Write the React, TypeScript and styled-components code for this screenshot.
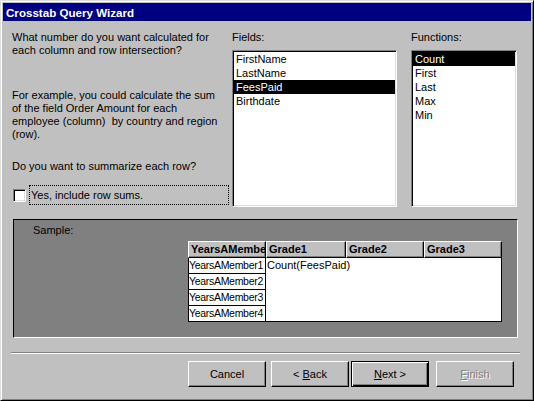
import React from "react";
import styled, { createGlobalStyle } from "styled-components";

const Global = createGlobalStyle`
  html, body { margin: 0; padding: 0; background: #c0c0c0; }
  body { font-family: "Liberation Sans", Arial, sans-serif; font-size: 11px; color: #000; }
  * { box-sizing: border-box; }
`;

const Window = styled.div`
  width: 534px;
  height: 401px;
  background: #c0c0c0;
  border: 1px solid;
  border-color: #dfdfdf #000 #000 #dfdfdf;
  box-shadow: inset 1px 1px #fff, inset -1px -1px #808080;
  padding: 2px;
  display: flex;
  flex-direction: column;
`;

const TitleBar = styled.div`
  height: 18px;
  background: #000080;
  color: #fff;
  font-weight: bold;
  font-size: 11.6px;
  display: flex;
  align-items: center;
  padding-left: 3px;
`;

const Main = styled.div`
  flex: 1;
  display: flex;
  flex-direction: column;
  padding: 10px 14px 0 9px;
`;

const Top = styled.div`
  display: flex;
  height: 176px;
`;

const LeftCol = styled.div`
  width: 220px;
  display: flex;
  flex-direction: column;
`;

const Para = styled.p<{ $mt?: number }>`
  margin: ${(p) => p.$mt ?? 0}px 0 0 0;
  line-height: 13px;
  white-space: nowrap;
`;

const CheckRow = styled.div`
  margin-top: 12px;
  display: flex;
  align-items: center;
  height: 20px;
`;

const CheckBox = styled.div`
  width: 13px;
  height: 13px;
  margin-left: 1px;
  background: #fff;
  border: 1px solid;
  border-color: #808080 #fff #fff #808080;
  box-shadow: inset 1px 1px #000, inset -1px -1px #dfdfdf;
`;

const FocusLabel = styled.div`
  margin-left: 3px;
  width: 200px;
  height: 20px;
  border: 1px dotted #000;
  padding-left: 1px;
  line-height: 18px;
`;

const ListCol = styled.div<{ $w: number; $ml?: number }>`
  width: ${(p) => p.$w}px;
  margin-left: ${(p) => p.$ml ?? 0}px;
  display: flex;
  flex-direction: column;
`;

const Label = styled.div`
  line-height: 13px;
  height: 13px;
  margin-bottom: 6px;
`;

const ListBox = styled.div`
  height: 157px;
  background: #fff;
  border: 1px solid;
  border-color: #808080 #fff #fff #808080;
  box-shadow: inset 1px 1px #000, inset -1px -1px #dfdfdf;
  padding: 1px;
`;

const Item = styled.div<{ $sel?: boolean }>`
  height: 14px;
  line-height: 14px;
  padding-left: 2px;
  background: ${(p) => (p.$sel ? "#000" : "transparent")};
  color: ${(p) => (p.$sel ? "#fff" : "#000")};
  white-space: nowrap;
`;

const SamplePanel = styled.div`
  margin: 12px -1px 0 1px;
  height: 119px;
  background: #808080;
  border: 1px solid;
  border-color: #000 #fff #fff #000;
  padding: 4px 15px 0 19px;
  display: flex;
  flex-direction: column;
`;

const SampleLabel = styled.div`
  line-height: 13px;
  height: 13px;
`;

const TableRow = styled.div`
  margin-top: 4px;
  display: flex;
  justify-content: flex-end;
`;

const Table = styled.div`
  width: 314px;
  display: flex;
  flex-direction: column;
`;

const HeaderRow = styled.div`
  display: flex;
  height: 17px;
`;

const HeaderCell = styled.div<{ $w: number }>`
  width: ${(p) => p.$w}px;
  background: #c0c0c0;
  border: 1px solid;
  border-color: #fff #000 #000 #fff;
  box-shadow: inset -1px -1px #808080;
  font-weight: bold;
  padding-left: 2px;
  line-height: 14px;
  overflow: hidden;
  white-space: nowrap;
`;

const TableBody = styled.div`
  display: flex;
  border-left: 1px solid #000;
  border-right: 1px solid #000;
`;

const RowHeads = styled.div`
  width: 77px;
  display: flex;
  flex-direction: column;
`;

const RowHead = styled.div`
  height: 16px;
  background: #fff;
  border-right: 1px solid #000;
  border-bottom: 1px solid #000;
  line-height: 15px;
  font-size: 10.5px;
  letter-spacing: -0.3px;
  overflow: hidden;
  white-space: nowrap;
`;

const DataArea = styled.div`
  flex: 1;
  background: #fff;
  border-bottom: 1px solid #000;
  padding-left: 1px;
  line-height: 15px;
  white-space: nowrap;
`;

const Separator = styled.div`
  margin: 14px -3px 0 -1px;
  height: 2px;
  border-top: 1px solid #808080;
  border-bottom: 1px solid #fff;
`;

const ButtonRow = styled.div`
  margin-top: 7px;
  display: flex;
  justify-content: flex-end;
  padding-right: 3px;
`;

const Button = styled.div<{ $default?: boolean; $disabled?: boolean; $ml?: number }>`
  width: 78px;
  height: 26px;
  margin-left: ${(p) => p.$ml ?? 0}px;
  background: #c0c0c0;
  border: 1px solid;
  border-color: ${(p) => (p.$default ? "#000" : "#fff #000 #000 #fff")};
  box-shadow: ${(p) =>
    p.$default
      ? "inset 1px 1px #fff, inset -1px -1px #000, inset -2px -2px #808080"
      : "inset -1px -1px #808080"};
  display: flex;
  align-items: center;
  justify-content: center;
  color: ${(p) => (p.$disabled ? "#808080" : "#000")};
  text-shadow: ${(p) => (p.$disabled ? "1px 1px #fff" : "none")};
`;

export default function App() {
  return (
    <>
      <Global />
      <Window>
        <TitleBar>Crosstab Query Wizard</TitleBar>
        <Main>
          <Top>
            <LeftCol>
              <Para>
                What number do you want calculated for
                <br />
                each column and row intersection?
              </Para>
              <Para $mt={32}>
                For example, you could calculate the sum
                <br />
                of the field Order Amount for each
                <br />
                employee (column)&nbsp; by country and region
                <br />
                (row).
              </Para>
              <Para $mt={19}>Do you want to summarize each row?</Para>
              <CheckRow>
                <CheckBox />
                <FocusLabel>Yes, include row sums.</FocusLabel>
              </CheckRow>
            </LeftCol>
            <ListCol $w={165}>
              <Label>Fields:</Label>
              <ListBox>
                <Item>FirstName</Item>
                <Item>LastName</Item>
                <Item $sel>FeesPaid</Item>
                <Item>Birthdate</Item>
              </ListBox>
            </ListCol>
            <ListCol $w={106} $ml={14}>
              <Label>Functions:</Label>
              <ListBox>
                <Item $sel>Count</Item>
                <Item>First</Item>
                <Item>Last</Item>
                <Item>Max</Item>
                <Item>Min</Item>
              </ListBox>
            </ListCol>
          </Top>
          <SamplePanel>
            <SampleLabel>Sample:</SampleLabel>
            <TableRow>
              <Table>
                <HeaderRow>
                  <HeaderCell $w={78}>YearsAMember</HeaderCell>
                  <HeaderCell $w={80}>Grade1</HeaderCell>
                  <HeaderCell $w={78}>Grade2</HeaderCell>
                  <HeaderCell $w={78}>Grade3</HeaderCell>
                </HeaderRow>
                <TableBody>
                  <RowHeads>
                    <RowHead>YearsAMember1</RowHead>
                    <RowHead>YearsAMember2</RowHead>
                    <RowHead>YearsAMember3</RowHead>
                    <RowHead>YearsAMember4</RowHead>
                  </RowHeads>
                  <DataArea>Count(FeesPaid)</DataArea>
                </TableBody>
              </Table>
            </TableRow>
          </SamplePanel>
          <Separator />
          <ButtonRow>
            <Button>Cancel</Button>
            <Button $ml={5}>
              &lt;&nbsp;<u>B</u>ack
            </Button>
            <Button $ml={2} $default>
              <u>N</u>ext &gt;
            </Button>
            <Button $ml={7} $disabled>
              <u>F</u>inish
            </Button>
          </ButtonRow>
        </Main>
      </Window>
    </>
  );
}
